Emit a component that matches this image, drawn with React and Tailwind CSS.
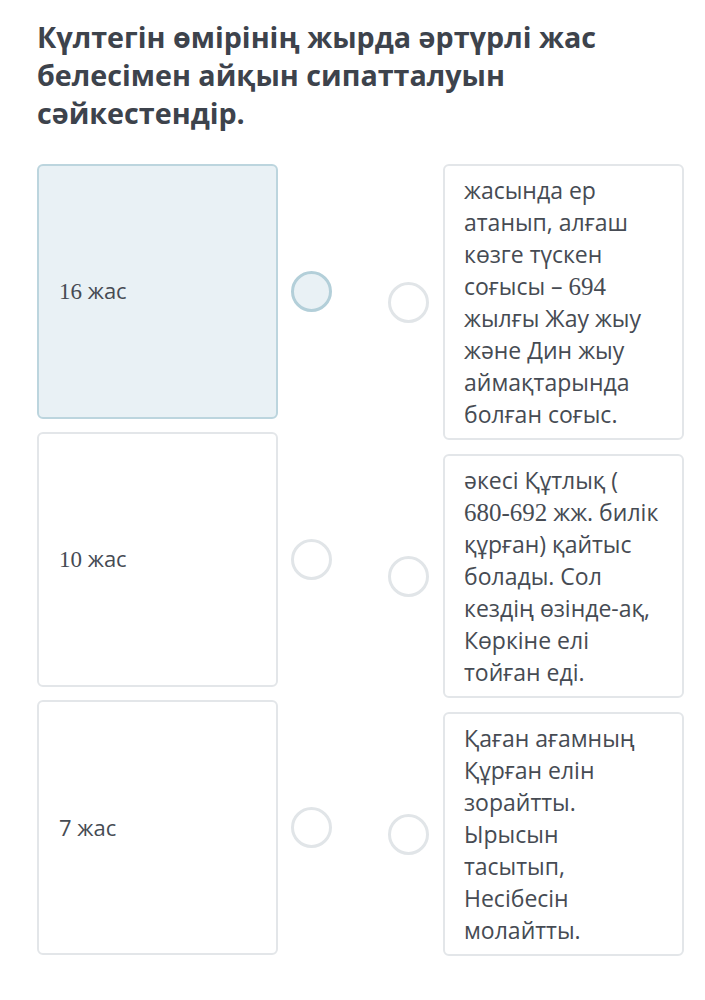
import React from 'react';

const sans = "font-['Open_Sans','Noto_Sans',sans-serif]";
const num = "font-['Liberation_Serif','DejaVu_Serif',serif]";

const leftItems = [
  { id: 1, label: <><span className={`${num} text-[23px]`}>16</span> жас</>, active: true },
  { id: 2, label: <><span className={`${num} text-[23px]`}>10</span> жас</> },
  { id: 3, label: <>7 жас</> },
];

const rightItems = [
  {
    id: 1,
    text: (
      <>
        жасында ер атанып, алғаш көзге түскен соғысы – <span className={`${num} text-[25px] leading-none`}>694</span> жылғы Жау жыу және Дин жыу аймақтарында болған соғыс.
      </>
    ),
  },
  {
    id: 2,
    text: (
      <>
        әкесі Құтлық ( <span className={`${num} text-[25px] leading-none`}>680-692</span> жж. билік құрған) қайтыс болады. Сол кездің өзінде-ақ, Көркіне елі тойған еді.
      </>
    ),
  },
  {
    id: 3,
    text: <>Қаған ағамның Құрған елін зорайтты. Ырысын тасытып, Несібесін молайтты.</>,
  },
];

const Dot = ({ active }) => (
  <div
    className={
      active
        ? 'w-[41px] h-[41px] rounded-full border-[3px] border-[#b3cfd9] bg-[#e9f1f5]'
        : 'w-[41px] h-[41px] rounded-full border-[3px] border-[#e1e5e8] bg-white'
    }
  />
);

export default function App() {
  return (
    <div className={`${sans} bg-white min-h-screen px-[37px] pt-[18px] text-[#464b53]`}>
      <h1 className="text-[28.7px] leading-[38px] font-bold text-[#3d434c] pr-[50px]">
        Күлтегін өмірінің жырда әртүрлі жас белесімен айқын сипатталуын сәйкестендір.
      </h1>

      <div className="flex mt-[32px]">
        {/* left cards + their dots */}
        <div className="flex flex-col gap-[13px]">
          {leftItems.map((it) => (
            <div key={it.id} className="flex items-center">
              <div
                className={
                  it.active
                    ? 'w-[241px] h-[255px] rounded-[6px] border-2 border-[#bcd5de] bg-[#e9f1f5] flex items-center px-[20px] text-[22px]'
                    : 'w-[241px] h-[255px] rounded-[6px] border-2 border-[#e3e6e9] bg-white flex items-center px-[20px] text-[22px]'
                }
              >
                <p>{it.label}</p>
              </div>
              <div className="ml-[13px]">
                <Dot active={it.active} />
              </div>
            </div>
          ))}
        </div>

        {/* right dots + cards */}
        <div className="flex flex-col gap-[14px] ml-[56px]">
          {rightItems.map((it) => (
            <div key={it.id} className="flex items-center">
              <Dot />
              <div className="ml-[14px] w-[241px] rounded-[6px] border-2 border-[#e3e6e9] bg-white pl-[19px] pr-[18px] py-[8px] text-[23px] leading-[32px]">
                {it.text}
              </div>
            </div>
          ))}
        </div>
      </div>
    </div>
  );
}
